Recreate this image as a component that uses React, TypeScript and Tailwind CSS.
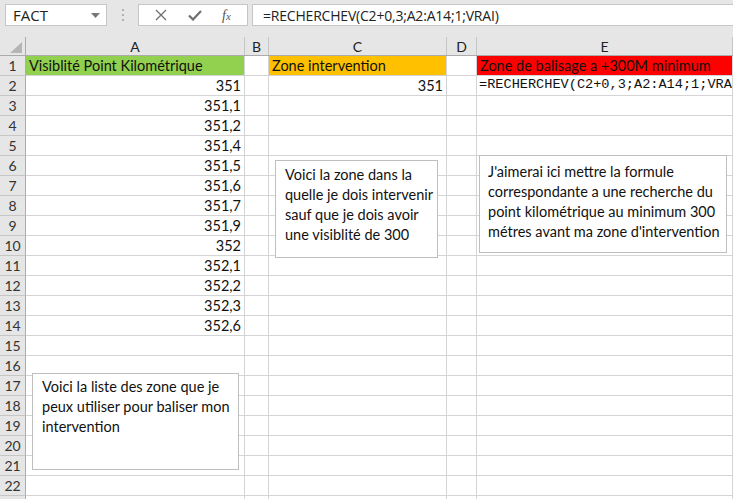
import React from "react";

const COLS = [
  { key: "A", w: "w-[219px]" },
  { key: "B", w: "w-[24px]" },
  { key: "C", w: "w-[178px]" },
  { key: "D", w: "w-[30px]" },
  { key: "E", w: "flex-1" },
];

const valuesA = ["351", "351,1", "351,2", "351,4", "351,5", "351,6", "351,7", "351,9", "352", "352,1", "352,2", "352,3", "352,6"];

const cellFont = { fontFamily: "Lato, 'Open Sans', sans-serif" };

const FormulaBar = () => (
  <div className="h-[37px] bg-[#e6e6e6] flex items-start pt-[4px] pl-[5px]">
    <div className="w-[102px] h-[22px] bg-white border border-[#c6c6c6] flex items-center justify-between pl-[7px] pr-[6px]">
      <span className="text-[15px] text-[#222]" style={{ fontFamily: "'Open Sans', sans-serif" }}>FACT</span>
      <svg width="9" height="5" viewBox="0 0 9 5"><path d="M0 0h9L4.5 5z" fill="#777" /></svg>
    </div>
    <div className="w-[31px] h-[22px] flex flex-col items-center justify-center gap-[3px]">
      <span className="w-[2px] h-[2px] bg-[#b0b0b0]" />
      <span className="w-[2px] h-[2px] bg-[#b0b0b0]" />
      <span className="w-[2px] h-[2px] bg-[#b0b0b0]" />
    </div>
    <div className="w-[110px] h-[22px] bg-white border border-[#c6c6c6] flex items-center justify-around px-[6px]">
      <svg width="12" height="12" viewBox="0 0 12 12"><path d="M1 1l10 10M11 1L1 11" stroke="#6f6f6f" strokeWidth="1.3" /></svg>
      <svg width="14" height="11" viewBox="0 0 14 11"><path d="M1 5.5l4 4L13 1" stroke="#6f6f6f" strokeWidth="2.2" fill="none" /></svg>
      <span className="text-[14px] italic text-[#555]" style={{ fontFamily: "'Liberation Serif', serif" }}>f<span className="text-[11px]">x</span></span>
    </div>
    <div className="ml-[4px] flex-1 h-[22px] bg-white border border-[#c6c6c6] border-r-0 flex items-center pl-[10px]">
      <span className="text-[14px] text-[#222]" style={{ fontFamily: "'Open Sans', sans-serif", letterSpacing: "-0.2px" }}>=RECHERCHEV(C2+0,3;A2:A14;1;VRAI)</span>
    </div>
  </div>
);

const HeaderRow = () => (
  <div className="flex h-[19px] bg-[#e6e6e6] border-b border-[#ababab]">
    <div className="w-[26px] border-r border-[#ababab] flex items-end justify-end pr-[3px] pb-[2px]">
      <svg width="12" height="11" viewBox="0 0 12 11"><path d="M12 0v11H0z" fill="#b5b5b5" /></svg>
    </div>
    {COLS.map((c) => (
      <div key={c.key} className={`${c.w} border-r border-[#c6c6c6] flex items-center justify-center text-[14px] text-[#222]`} style={cellFont}>
        {c.key}
      </div>
    ))}
  </div>
);

type Cell = { text?: string; bg?: string; align?: string; mono?: boolean };

const rowCells = (r: number): Cell[] => {
  if (r === 1)
    return [
      { text: "Visiblité Point Kilométrique", bg: "bg-[#92d050]" },
      {},
      { text: "Zone intervention", bg: "bg-[#ffc000]" },
      {},
      { text: "Zone de balisage a +300M minimum", bg: "bg-[#ff0000]" },
    ];
  const a: Cell = r <= 14 ? { text: valuesA[r - 2], align: "justify-end" } : {};
  if (r === 2)
    return [a, {}, { text: "351", align: "justify-end" }, {}, { text: "=RECHERCHEV(C2+0,3;A2:A14;1;VRAI)", mono: true }];
  return [a, {}, {}, {}, {}];
};

const Row = ({ r }: { r: number }) => (
  <div className="flex h-[20px]">
    <div className="w-[26px] bg-[#e6e6e6] border-r border-b border-r-[#ababab] border-b-[#c6c6c6] flex items-center justify-center text-[14px] text-[#333]" style={cellFont}>
      {r < 23 ? r : ""}
    </div>
    {rowCells(r).map((c, i) => (
      <div
        key={i}
        className={`${COLS[i].w} min-w-0 overflow-hidden whitespace-nowrap border-r border-b border-[#d4d4d4] flex items-center text-[14.5px] text-[#111] ${c.mono ? "pl-[2px]" : "px-[3px]"} ${c.bg ?? "bg-white"} ${c.align ?? "justify-start"}`}
        style={c.mono ? { fontFamily: "'Liberation Mono', monospace", fontSize: "13.6px" } : cellFont}
      >
        {c.text}
      </div>
    ))}
  </div>
);

const Note = ({ className, lines }: { className: string; lines: string[] }) => (
  <div className={`absolute bg-white border border-[#bfbfbf] text-[14.5px] leading-[20px] text-[#111] ${className}`} style={cellFont}>
    {lines.map((l) => (
      <div key={l}>{l}</div>
    ))}
  </div>
);

export default function App() {
  const rows = Array.from({ length: 23 }, (_, i) => i + 1);
  return (
    <div className="relative w-[733px] h-[499px] overflow-hidden bg-white">
      <FormulaBar />
      <HeaderRow />
      {rows.map((r) => (
        <Row key={r} r={r} />
      ))}
      <Note
        className="left-[275px] top-[160px] w-[163px] h-[98px] pl-[9px] pt-[4px]"
        lines={["Voici la zone dans la", "quelle je dois intervenir", "sauf que je dois avoir", "une visiblité de 300"]}
      />
      <Note
        className="left-[479px] top-[155px] w-[248px] h-[98px] pl-[8px] pt-[6px]"
        lines={["J'aimerai ici mettre la formule", "correspondante a une recherche du", "point kilométrique au minimum 300", "métres avant ma zone d'intervention"]}
      />
      <Note
        className="left-[32px] top-[373px] w-[207px] h-[97px] pl-[9px] pt-[3px]"
        lines={["Voici la liste des zone que je", "peux utiliser pour baliser mon", "intervention"]}
      />
    </div>
  );
}
